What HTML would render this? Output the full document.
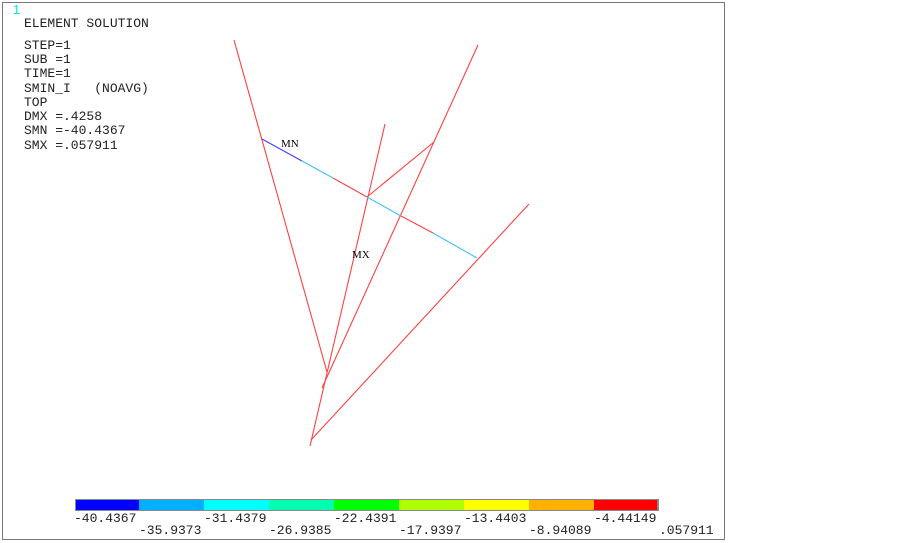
<!DOCTYPE html>
<html><head><style>
html,body{margin:0;padding:0;background:#fff;width:903px;height:543px;overflow:hidden}
.t{font-family:"Liberation Mono",monospace;font-size:13px;fill:#222;white-space:pre}
</style></head><body>
<svg width="903" height="543" xmlns="http://www.w3.org/2000/svg">
<rect x="2.5" y="2.5" width="722" height="537" fill="#fff" stroke="#777" stroke-width="1"/>
<text x="13" y="14" style="font-family:'Liberation Sans',sans-serif;font-size:13px;fill:#00e0e0">1</text>
<text class="t" x="24" y="27">ELEMENT SOLUTION</text>
<text class="t" x="24" y="49">STEP=1</text>
<text class="t" x="24" y="63">SUB =1</text>
<text class="t" x="24" y="77">TIME=1</text>
<text class="t" x="24" y="92" xml:space="preserve">SMIN_I   (NOAVG)</text>
<text class="t" x="24" y="106">TOP</text>
<text class="t" x="24" y="120">DMX =.4258</text>
<text class="t" x="24" y="134">SMN =-40.4367</text>
<text class="t" x="24" y="149">SMX =.057911</text>
<g stroke="#ff4040" stroke-width="1.1" fill="none">
<line x1="234" y1="40" x2="327" y2="372"/>
<line x1="385" y1="124" x2="310" y2="446"/>
<line x1="478" y1="45" x2="322" y2="388"/>
<line x1="529" y1="204" x2="311" y2="440"/>
<line x1="367" y1="197" x2="434" y2="142"/>
<line x1="333" y1="178" x2="367" y2="197"/>
<line x1="401" y1="216" x2="433" y2="233"/>
</g>
<line x1="262" y1="139" x2="302" y2="161" stroke="#4040ff" stroke-width="1.1"/>
<g stroke="#40c0ff" stroke-width="1.1">
<line x1="302" y1="161" x2="333" y2="178"/>
<line x1="367" y1="197" x2="401" y2="216"/>
<line x1="433" y1="233" x2="477" y2="258"/>
</g>
<text x="281" y="147" style="font-family:'Liberation Serif',serif;font-size:11px">MN</text>
<text x="352" y="258" style="font-family:'Liberation Serif',serif;font-size:11px">MX</text>
<rect x="75" y="499" width="584" height="12" fill="#888"/>
<rect x="76" y="500" width="63" height="10" fill="#0000ff"/>
<rect x="139" y="500" width="65" height="10" fill="#00b0ff"/>
<rect x="204" y="500" width="65" height="10" fill="#00ffff"/>
<rect x="269" y="500" width="65" height="10" fill="#00ffb0"/>
<rect x="334" y="500" width="65" height="10" fill="#00ff00"/>
<rect x="399" y="500" width="65" height="10" fill="#b0ff00"/>
<rect x="464" y="500" width="65" height="10" fill="#ffff00"/>
<rect x="529" y="500" width="65" height="10" fill="#ffb000"/>
<rect x="594" y="500" width="63" height="10" fill="#ff0000"/>
<text class="t" x="74" y="522">-40.4367</text>
<text class="t" x="139" y="534">-35.9373</text>
<text class="t" x="204" y="522">-31.4379</text>
<text class="t" x="269" y="534">-26.9385</text>
<text class="t" x="334" y="522">-22.4391</text>
<text class="t" x="399" y="534">-17.9397</text>
<text class="t" x="464" y="522">-13.4403</text>
<text class="t" x="529" y="534">-8.94089</text>
<text class="t" x="594" y="522">-4.44149</text>
<text class="t" x="659" y="534">.057911</text>
</svg>
</body></html>
